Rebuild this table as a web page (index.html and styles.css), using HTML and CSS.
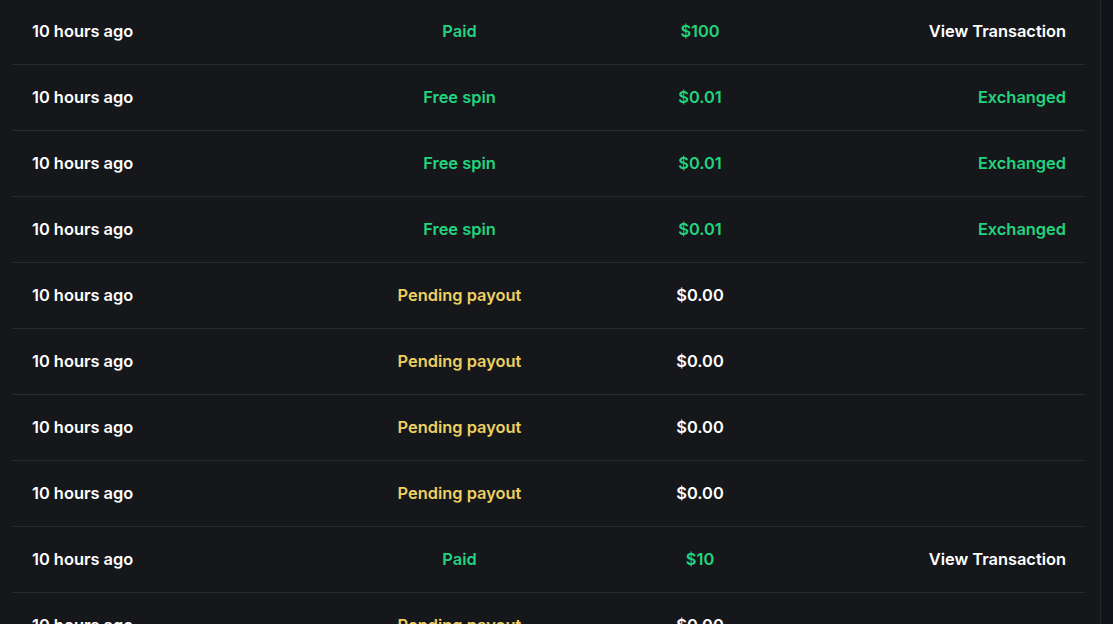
FILE: index.html
```html
<!DOCTYPE html>
<html>
<head>
<meta charset="utf-8">
<link rel="stylesheet" href="styles.css">
</head>
<body>
<div class="layout">
  <main class="main">
    <div class="list">
      <div class="row"><span class="c1">10 hours ago</span><span class="c2 green">Paid</span><span class="c3 green">$100</span><span class="c4">View Transaction</span></div>
      <div class="row"><span class="c1">10 hours ago</span><span class="c2 green">Free spin</span><span class="c3 green">$0.01</span><span class="c4 green">Exchanged</span></div>
      <div class="row"><span class="c1">10 hours ago</span><span class="c2 green">Free spin</span><span class="c3 green">$0.01</span><span class="c4 green">Exchanged</span></div>
      <div class="row"><span class="c1">10 hours ago</span><span class="c2 green">Free spin</span><span class="c3 green">$0.01</span><span class="c4 green">Exchanged</span></div>
      <div class="row"><span class="c1">10 hours ago</span><span class="c2 yellow">Pending payout</span><span class="c3">$0.00</span><span class="c4"></span></div>
      <div class="row"><span class="c1">10 hours ago</span><span class="c2 yellow">Pending payout</span><span class="c3">$0.00</span><span class="c4"></span></div>
      <div class="row"><span class="c1">10 hours ago</span><span class="c2 yellow">Pending payout</span><span class="c3">$0.00</span><span class="c4"></span></div>
      <div class="row"><span class="c1">10 hours ago</span><span class="c2 yellow">Pending payout</span><span class="c3">$0.00</span><span class="c4"></span></div>
      <div class="row"><span class="c1">10 hours ago</span><span class="c2 green">Paid</span><span class="c3 green">$10</span><span class="c4">View Transaction</span></div>
      <div class="row"><span class="c1">10 hours ago</span><span class="c2 yellow">Pending payout</span><span class="c3">$0.00</span><span class="c4"></span></div>
    </div>
  </main>
  <aside class="side"></aside>
</div>
</body>
</html>
```
FILE: styles.css
```css
html, body {
  margin: 0;
  padding: 0;
  height: 100%;
  overflow: hidden;
  background: #16171b;
}
.layout {
  display: flex;
  height: 100%;
}
.main {
  width: 1101px;
  border-right: 1px solid #25262b;
  background: #16171b;
  padding: 0 15px 0 12px;
  box-sizing: border-box;
  flex-shrink: 0;
}
.side {
  flex: 1;
  background: #111318;
}
.list {
  margin-top: -1px;
}
.row {
  display: grid;
  grid-template-columns: 307px 241px 240px 1fr;
  align-items: center;
  box-sizing: border-box;
  height: 66px;
  padding: 0 19px 2px 20px;
  border-bottom: 1px solid #2a2b30;
  font-family: "Inter", "Lato", sans-serif;
  font-weight: 600;
  font-size: 16.4px;
  color: #ffffff;
}
.c2, .c3 { text-align: center; }
.c4 { text-align: right; }
.green { color: #22d47e; }
.yellow { color: #ecd062; }
```
